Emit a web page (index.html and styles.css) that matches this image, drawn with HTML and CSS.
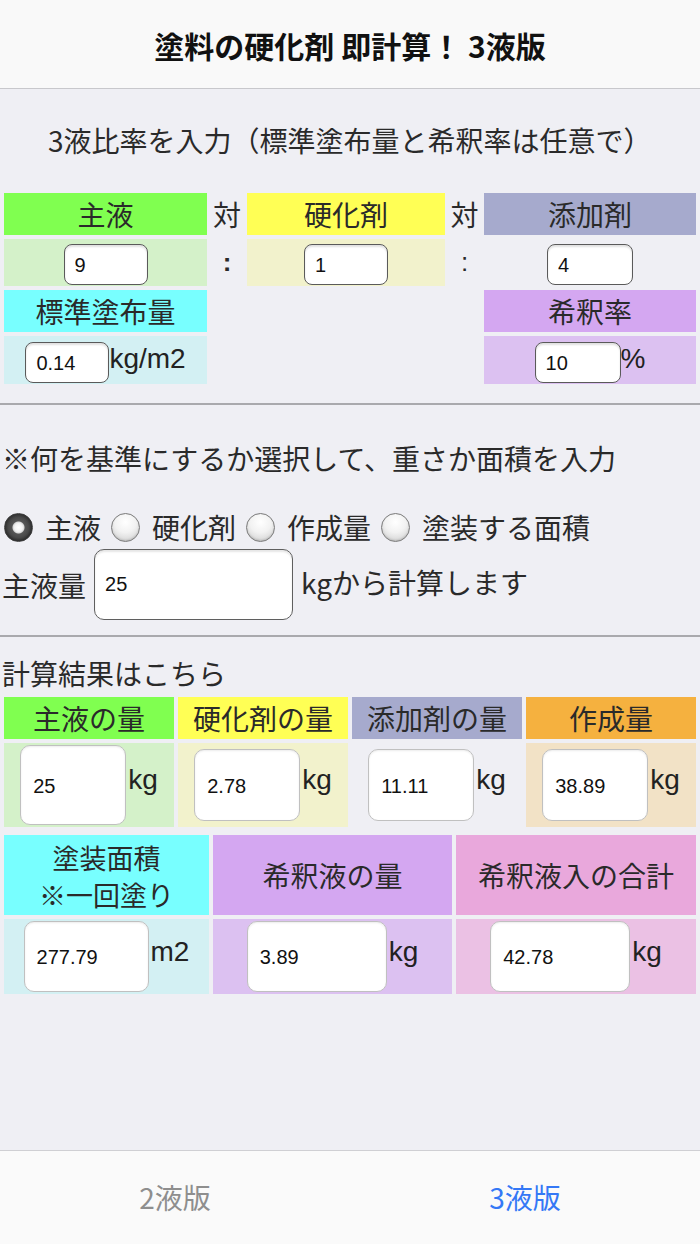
FILE: index.html
```html
<!DOCTYPE html>
<html lang="ja">
<head>
<meta charset="utf-8">
<title>塗料の硬化剤 即計算！ 3液版</title>
<link rel="stylesheet" href="styles.css">
</head>
<body>
<div class="app">
  <header class="nav"><h1 class="nav-title">塗料の硬化剤 即計算！ 3液版</h1></header>
  <main class="content">
    <p class="intro">3液比率を入力（標準塗布量と希釈率は任意で）</p>
    <div class="ratio">
      <div class="lab c-green">主液</div>
      <div class="sep">対</div>
      <div class="lab c-yellow">硬化剤</div>
      <div class="sep">対</div>
      <div class="lab c-slate">添加剤</div>

      <div class="val l-green shift"><input class="in-ratio" value="9"></div>
      <div class="sep colon bold">:</div>
      <div class="val l-yellow shift"><input class="in-ratio" value="1"></div>
      <div class="sep colon">:</div>
      <div class="val shift"><input class="in-ratio wide" value="4"></div>

      <div class="lab c-cyan">標準塗布量</div>
      <div></div>
      <div></div>
      <div></div>
      <div class="lab c-purple">希釈率</div>

      <div class="val l-cyan shift"><input class="in-ratio" value="0.14"><span class="unit">kg/m2</span></div>
      <div></div>
      <div></div>
      <div></div>
      <div class="val l-purple shift"><input class="in-ratio wide" value="10"><span class="unit">%</span></div>
    </div>

    <hr class="rule rule-1">

    <p class="note">※何を基準にするか選択して、重さか面積を入力</p>
    <div class="radios">
      <label class="radio"><input type="radio" name="base" checked><span>主液</span></label>
      <label class="radio"><input type="radio" name="base"><span>硬化剤</span></label>
      <label class="radio"><input type="radio" name="base"><span>作成量</span></label>
      <label class="radio"><input type="radio" name="base"><span>塗装する面積</span></label>
    </div>
    <div class="base-row">
      <span class="base-label">主液量</span>
      <input class="in-base" value="25">
      <span class="base-after">kgから計算します</span>
    </div>

    <hr class="rule rule-2">

    <p class="result-title">計算結果はこちら</p>
    <div class="res4">
      <div class="lab c-green">主液の量</div>
      <div class="lab c-yellow">硬化剤の量</div>
      <div class="lab c-slate">添加剤の量</div>
      <div class="lab c-orange">作成量</div>
      <div class="val l-green"><input class="in-res tall" value="25"><span class="unit">kg</span></div>
      <div class="val l-yellow"><input class="in-res" value="2.78"><span class="unit">kg</span></div>
      <div class="val"><input class="in-res" value="11.11"><span class="unit">kg</span></div>
      <div class="val l-orange"><input class="in-res" value="38.89"><span class="unit">kg</span></div>
    </div>
    <div class="res3">
      <div class="lab two c-cyan"><span class="line">塗装面積</span><span class="line">※一回塗り</span></div>
      <div class="lab c-purple">希釈液の量</div>
      <div class="lab c-pink">希釈液入の合計</div>
      <div class="val l-cyan"><input class="in-res2 w124" value="277.79"><span class="unit">m2</span></div>
      <div class="val l-purple"><input class="in-res2" value="3.89"><span class="unit">kg</span></div>
      <div class="val l-pink"><input class="in-res2" value="42.78"><span class="unit">kg</span></div>
    </div>
  </main>
  <footer class="tabbar">
    <div class="tab">2液版</div>
    <div class="tab active">3液版</div>
  </footer>
</div>
</body>
</html>
```
FILE: styles.css
```css
* { box-sizing: border-box; }
html, body { margin: 0; padding: 0; }
body {
  background: #efeff4;
  color: #2a2a2a;
  font-family: "Liberation Sans", "Noto Sans CJK JP", sans-serif;
  font-size: 28px;
}
.app {
  width: 700px;
  height: 1244px;
  display: flex;
  flex-direction: column;
}
.nav {
  height: 89px;
  background: #f9f9f9;
  border-bottom: 1px solid #c8c8cc;
  display: flex;
  align-items: center;
  justify-content: center;
  flex: none;
}
.nav-title {
  margin: 0;
  font-family: "Noto Sans CJK JP", sans-serif;
  font-size: 30px;
  font-weight: 700;
  color: #111;
  line-height: 36px;
  padding-top: 2px;
}
.content {
  flex: 1;
}
.intro {
  margin: 33px 0 0;
  padding-left: 48px;
  line-height: 36px;
  font-family: "Noto Sans CJK JP", sans-serif;
}
.ratio {
  margin-top: 35px;
  padding: 0 4px;
  display: grid;
  grid-template-columns: 203px 40px 198px 39px 212px;
  grid-template-rows: 42px 47px 42px 48px;
  row-gap: 4px;
}
.lab {
  display: flex;
  align-items: center;
  justify-content: center;
  line-height: 34px;
  font-family: "Noto Sans CJK JP", sans-serif;
  text-align: center;
}
.val {
  display: flex;
  align-items: center;
  justify-content: center;
}
.val.shift { padding-top: 4px; }
.sep {
  display: flex;
  align-items: center;
  justify-content: center;
  font-family: "Noto Sans CJK JP", sans-serif;
  line-height: 34px;
}
.colon { font-family: "Liberation Sans", sans-serif; font-size: 26px; padding-bottom: 2px; }
.colon.bold { font-weight: 700; }

.c-green { background: #80ff50; }
.l-green { background: #d4f1c9; }
.c-yellow { background: #ffff55; }
.l-yellow { background: #f2f2cc; }
.c-slate { background: #a6aacd; }
.c-cyan { background: #78ffff; }
.l-cyan { background: #d3f0f3; }
.c-purple { background: #d4a7f1; }
.l-purple { background: #dcc1f1; }
.c-orange { background: #f5b13f; }
.l-orange { background: #f2e2c6; }
.c-pink { background: #e9a8dc; }
.l-pink { background: #ebc1e4; }

input {
  font-family: "Liberation Sans", sans-serif;
  font-size: 20px;
  color: #111;
  background: #fff;
  margin: 0;
  outline: none;
}
.in-ratio {
  width: 84px;
  height: 41px;
  border: 1.5px solid #5a5a5a;
  border-radius: 8px;
  padding: 2px 0 0 10px;
  box-shadow: inset 0 2px 2px rgba(0,0,0,0.12);
}
.in-ratio.wide { width: 86px; }
.unit {
  font-family: "Liberation Sans", sans-serif;
  font-size: 28px;
  line-height: 32px;
  color: #222;
  padding-bottom: 6px;
}
.rule {
  margin: 0;
  border: 0;
  height: 2px;
  background: #a9a9ad;
}
.rule-1 { margin-top: 19px; }
.note {
  margin: 35px 0 0;
  padding-left: 2px;
  line-height: 36px;
  font-family: "Noto Sans CJK JP", sans-serif;
}
.radios {
  margin-top: 33px;
  padding-left: 4px;
  display: flex;
  align-items: center;
  height: 36px;
  font-family: "Noto Sans CJK JP", sans-serif;
}
.radio {
  display: flex;
  align-items: center;
  margin-right: 10px;
}
.radio span { margin-left: 12px; line-height: 36px; }
.radio input {
  -webkit-appearance: none;
  appearance: none;
  width: 29px;
  height: 29px;
  border-radius: 50%;
  border: 1px solid #7a7a7a;
  background: radial-gradient(circle at 50% 30%, #ffffff 0%, #f2f2f2 45%, #c9c9c9 100%);
  box-shadow: inset 0 -1px 2px rgba(0,0,0,0.15);
}
.radio input:checked {
  border: 1px solid #3a3a3a;
  background:
    radial-gradient(circle at 50% 50%, #ffffff 0, #f2f2f2 4px, #d8d8d8 5.5px, #555 6.5px, #4a4a4a 10px, #2e2e2e 14px);
}
.base-row {
  margin-top: 4px;
  display: flex;
  align-items: center;
  height: 71px;
  font-family: "Noto Sans CJK JP", sans-serif;
}
.base-label { padding-left: 2px; line-height: 36px; }
.in-base {
  margin-left: 8px;
  width: 199px;
  height: 71px;
  border: 1.5px solid #5f5f5f;
  border-radius: 10px;
  padding: 0 0 0 10px;
  box-shadow: inset 0 2px 2px rgba(0,0,0,0.1);
}
.base-after {
  margin-left: 8px;
  line-height: 36px;
  padding-bottom: 6px;
}
.rule-2 { margin-top: 15px; }
.result-title {
  margin: 18px 0 0;
  padding-left: 2px;
  line-height: 36px;
  font-family: "Noto Sans CJK JP", sans-serif;
}
.res4 {
  margin-top: 6px;
  padding: 0 4px;
  display: grid;
  grid-template-columns: repeat(4, 170px);
  grid-template-rows: 42px 84px;
  gap: 4px;
}
.in-res {
  width: 106px;
  height: 72px;
  border: 1.5px solid #c0c0c0;
  border-radius: 10px;
  padding: 2px 0 0 12px;
  margin-right: 2px;
  box-shadow: inset 0 1px 2px rgba(0,0,0,0.08);
}
.in-res.tall { height: 80px; }
.res4 .unit, .res3 .unit { padding-bottom: 10px; }
.res3 {
  margin-top: 8px;
  padding: 0 4px;
  display: grid;
  grid-template-columns: 205px 239px 240px;
  grid-template-rows: 80px 75px;
  gap: 4px;
}
.lab.two {
  flex-direction: column;
  padding-top: 2px;
}
.lab.two .line {
  display: block;
  height: 37px;
  line-height: 37px;
  font-size: 27px;
}
.in-res2 {
  width: 140px;
  height: 71px;
  border: 1.5px solid #c0c0c0;
  border-radius: 10px;
  padding: 2px 0 0 12px;
  margin-right: 2px;
  box-shadow: inset 0 1px 2px rgba(0,0,0,0.08);
}
.in-res2.w124 { width: 125px; }
.tabbar {
  flex: none;
  height: 94px;
  background: #fafafa;
  border-top: 1px solid #cfcfd3;
  display: flex;
}
.tab {
  flex: 1;
  display: flex;
  align-items: center;
  justify-content: center;
  font-family: "Noto Sans CJK JP", sans-serif;
  font-size: 28px;
  color: #8e8e8e;
  padding-bottom: 2px;
}
.tab.active { color: #3478f6; }
```
